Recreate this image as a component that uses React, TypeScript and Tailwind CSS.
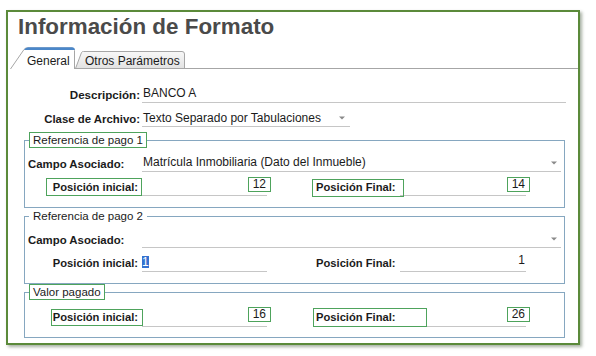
import type { ReactNode } from "react";

const fieldLine = "border-b border-[#c6c6c6]";

function Caret({ className = "" }: { className?: string }) {
  return (
    <svg width="6" height="4" viewBox="0 0 6 4" className={className}>
      <path d="M0 0.5h6L3 3.5z" fill="#8a8a8a" />
    </svg>
  );
}

// green annotation frame drawn over a label
function Mark({ className }: { className: string }) {
  return <span className={`pointer-events-none absolute border border-[#4ea35c] ${className}`} />;
}

function Val({ v, boxed }: { v: string; boxed?: boolean }) {
  return (
    <span
      className={`-mr-[4px] border px-[4px] leading-[13px] ${
        boxed ? "border-[#4ea35c]" : "border-transparent"
      }`}
    >
      {v}
    </span>
  );
}

function Legend({ text, boxed }: { text: string; boxed?: boolean }) {
  return (
    <legend
      className={`ml-[4px] border px-[3px] text-[11.5px] leading-[14px] ${
        boxed ? "border-[#4ea35c]" : "border-transparent"
      }`}
    >
      {text}
    </legend>
  );
}

type PosProps = {
  rowClass: string;
  iniMark?: string;
  finMark?: string;
  ini: ReactNode;
  fin: ReactNode;
};

function PosRow({ rowClass, iniMark, finMark, ini, fin }: PosProps) {
  return (
    <div className={`flex items-stretch ${rowClass}`}>
      <div className="relative w-[117px] whitespace-nowrap pr-[4px] pt-[2px] text-right text-[11.2px] font-bold leading-4">
        {iniMark && <Mark className={iniMark} />}
        Posición inicial:
      </div>
      <div className={`flex w-[125px] items-start justify-end ${fieldLine}`}>{ini}</div>
      <div className="relative ml-[45px] w-[88px] whitespace-nowrap pl-[4px] pt-[2px] text-[11.2px] font-bold leading-4">
        {finMark && <Mark className={finMark} />}
        Posición Final:
      </div>
      <div className={`flex w-[126px] items-start justify-end ${fieldLine}`}>{fin}</div>
    </div>
  );
}

function CampoRow({ value }: { value?: string }) {
  return (
    <div className="mt-[6px] flex items-end">
      <div className="w-[117px] pl-[3px] text-[11.4px] font-bold leading-4">Campo Asociado:</div>
      <div className={`flex h-[18px] w-[419px] items-start justify-between pl-[1px] pr-[4px] leading-4 ${fieldLine}`}>
        <span>{value}</span>
        <Caret className="mt-[7px]" />
      </div>
    </div>
  );
}

function Tabs() {
  return (
    <div className="mt-[7px] flex h-[22px] pl-[2px]">
      <div className="relative w-[65px] pl-[17px] pt-[6px] leading-4">
        <svg className="absolute inset-0" width="65" height="22" viewBox="0 0 65 22">
          <path d="M0.5 22 L14 2.5 Q15 1 17 1 H62 Q64.5 1 64.5 3.5 V22" fill="#fff" stroke="#a6a6a6" />
          <path d="M14 3 Q15.5 0.3 18 0.3 H62 Q64.8 0.3 64.8 3 Z" fill="#4b87c9" />
        </svg>
        <span className="relative">General</span>
      </div>
      <div className="relative w-[110px] pl-[10px] pt-[6px] leading-4">
        <svg className="absolute inset-0" width="110" height="22" viewBox="0 0 110 22">
          <defs>
            <linearGradient id="tg" x1="0" y1="0" x2="0" y2="1">
              <stop offset="0" stopColor="#f8f8f8" />
              <stop offset="1" stopColor="#e2e2e2" />
            </linearGradient>
          </defs>
          <path d="M0.5 21.5 L6.5 5.5 Q7 4.5 8.5 4.5 H107 Q109.5 4.5 109.5 7 V21.5" fill="url(#tg)" stroke="#a6a6a6" />
          <path d="M0 21.5 H110" stroke="#a6a6a6" />
        </svg>
        <span className="relative">Otros Parámetros</span>
      </div>
      <div className="flex-1 border-b border-[#a6a6a6]" />
    </div>
  );
}

export default function App() {
  return (
    <div className="h-[356px] w-[596px] bg-white pl-[6px] pt-[10px] font-['Liberation_Sans',Arial,sans-serif] text-[12px] text-[#1b1b1b]">
      <div className="h-[335px] w-[574px] border-2 border-[#5b8a3a] bg-white shadow-[2px_2px_3px_rgba(60,80,50,0.45)]">
        <h1 className="mt-[2px] h-[26px] pl-[10px] text-[22.4px] font-bold leading-[26px] text-[#4a4a4a]">
          Información de Formato
        </h1>

        <Tabs />

        <div className="mt-[17px] flex items-center">
          <div className="w-[134px] pr-[2px] text-right text-[11.6px] font-bold leading-4">Descripción:</div>
          <div className={`h-[17px] w-[424px] pl-[1px] leading-[14px] ${fieldLine}`}>BANCO A</div>
        </div>

        <div className="mt-[7px] flex items-center">
          <div className="w-[134px] pr-[2px] text-right text-[11.4px] font-bold leading-4">Clase de Archivo:</div>
          <div className={`flex h-[17px] w-[208px] items-start justify-between pl-[1px] pr-[5px] leading-4 ${fieldLine}`}>
            <span>Texto Separado por Tabulaciones</span>
            <Caret className="mt-[6px]" />
          </div>
        </div>

        <fieldset className="ml-[16px] mt-[5px] w-[541px] border border-[#86a7c0] pb-[11px]">
          <Legend text="Referencia de pago 1" boxed />
          <CampoRow value="Matrícula Inmobiliaria (Dato del Inmueble)" />
          <PosRow
            rowClass="mt-[5px] h-[19px]"
            iniMark="left-[21px] top-[1px] h-[18px] w-[96px]"
            finMark="left-0 top-[2px] h-[18px] w-[92px]"
            ini={<Val v="12" boxed />}
            fin={<Val v="14" boxed />}
          />
        </fieldset>

        <fieldset className="ml-[16px] w-[541px] border border-[#86a7c0] pb-[11px]">
          <Legend text="Referencia de pago 2" />
          <CampoRow />
          <PosRow
            rowClass="mt-[5px] h-[19px]"
            ini={<span className="mr-auto mt-[3px] bg-[#3572d0] leading-[12px] text-white">1</span>}
            fin={<Val v="1" />}
          />
        </fieldset>

        <fieldset className="ml-[16px] w-[541px] border border-[#86a7c0] pb-[10px]">
          <Legend text="Valor pagado" boxed />
          <PosRow
            rowClass="mt-[7px] h-[20px]"
            iniMark="left-[26px] top-[2px] h-[17px] w-[92px]"
            finMark="left-[1px] top-[1px] h-[19px] w-[114px]"
            ini={<Val v="16" boxed />}
            fin={<Val v="26" boxed />}
          />
        </fieldset>
      </div>
    </div>
  );
}
